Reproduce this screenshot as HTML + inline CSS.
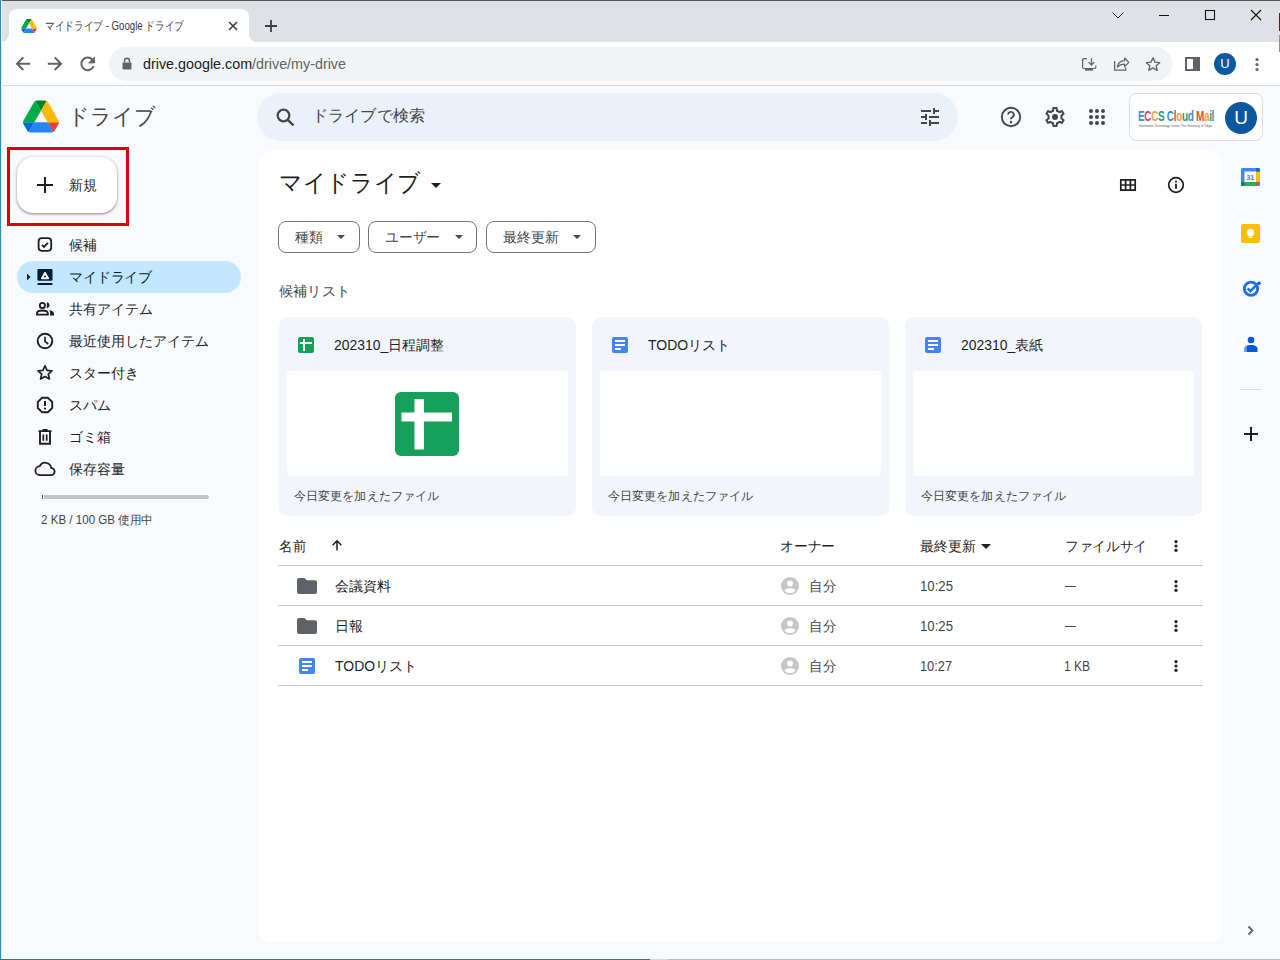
<!DOCTYPE html>
<html><head><meta charset="utf-8">
<style>
*{box-sizing:border-box;margin:0;padding:0}
html,body{width:1280px;height:960px;overflow:hidden;background:#f8fafd;font-family:"Liberation Sans",sans-serif;color:#1f1f1f}
.a{position:absolute}
svg{display:block}
/* chrome */
#topline{left:0;top:0;width:1280px;height:1px;background:#555}
#tabstrip{left:0;top:1px;width:1280px;height:41px;background:#dee1e6}
#tab{left:9px;top:9px;width:240px;height:34px;background:#fff;border-radius:8px 8px 0 0}
#toolbar{left:0;top:42px;width:1280px;height:43px;background:#fff}
#tbline{left:0;top:85px;width:1280px;height:1px;background:#dadce0}
#omni{left:109px;top:47px;width:1063px;height:34px;background:#f1f3f4;border-radius:17px}
.ttl{font-size:12px;color:#3c4043;white-space:nowrap}
.url{font-size:14px;color:#5f6368;white-space:nowrap}
#leftb{left:0;top:0;width:1px;height:960px;background:#2b8eb8;box-shadow:1px 0 0 #d4f6f8}
#main{left:258px;top:150px;width:965px;height:793px;background:#fff;border-radius:16px}
.nav{left:69px;font-size:14px;color:#1f1f1f;white-space:nowrap;line-height:20px}

.t{position:absolute;white-space:nowrap;line-height:20px;font-size:14px}
.fit{display:inline-block;transform-origin:0 50%}
#sb{left:257px;top:93px;width:701px;height:48px;background:#ebf1fa;border-radius:24px}
#newbtn{left:17px;top:157px;width:100px;height:56px;background:#fff;border-radius:16px;box-shadow:0 1px 2px rgba(0,0,0,.3),0 1px 3px 1px rgba(0,0,0,.15)}
#redbox{left:7px;top:147px;width:122px;height:79px;border:3px solid #e00000}
#pill{left:17px;top:261px;width:224px;height:32px;background:#c2e7ff;border-radius:16px}
.chip{position:absolute;top:221px;height:32px;border:1px solid #747775;border-radius:8px}
.card{position:absolute;top:317px;width:297px;height:199px;background:#f2f6fc;border-radius:9px}
.prev{position:absolute;left:8px;top:54px;width:281px;height:105px;background:#fff;border-radius:4px}
.hl{position:absolute;left:278px;width:925px;height:1px;background:#c7c7c7}
</style></head><body>
<div id="topline" class="a"></div>
<div id="tabstrip" class="a"></div>
<div id="tab" class="a"></div>
<div class="a" style="left:1px;top:34px;width:8px;height:8px;background:#fff"></div>
<div class="a" style="left:1px;top:34px;width:8px;height:8px;background:#dee1e6;border-radius:0 0 8px 0"></div>
<div class="a" style="left:249px;top:34px;width:8px;height:8px;background:#fff"></div>
<div class="a" style="left:249px;top:34px;width:8px;height:8px;background:#dee1e6;border-radius:0 0 0 8px"></div>
<div id="toolbar" class="a"></div>
<div id="tbline" class="a"></div>
<div id="omni" class="a"></div>
<div class="a ttl" style="left:45px;top:17px;line-height:18px"><span class="fit" style="--w:139px">マイドライブ - Google ドライブ</span></div>
<div class="a url" style="left:143px;top:55px;line-height:18px"><span class="fit" style="--w:203px"><span style="color:#202124">drive.google.com</span>/drive/my-drive</span></div>

<!-- tab favicon -->
<svg class="a" style="left:21px;top:19px" width="16" height="14" viewBox="0 0 87.3 78"><path d="m6.6 66.85 3.85 6.65c.8 1.4 1.95 2.5 3.3 3.3l13.75-23.8h-27.5c0 1.55.4 3.1 1.2 4.5z" fill="#0066da"/><path d="m43.65 25-13.75-23.8c-1.35.8-2.5 1.9-3.3 3.3l-25.4 44a9.06 9.06 0 0 0 -1.2 4.5h27.5z" fill="#00ac47"/><path d="m73.55 76.8c1.35-.8 2.5-1.9 3.3-3.3l1.6-2.75 7.65-13.25c.8-1.4 1.2-2.95 1.2-4.5h-27.502l5.852 11.5z" fill="#ea4335"/><path d="m43.65 25 13.75-23.8c-1.35-.8-2.9-1.2-4.5-1.2h-18.5c-1.6 0-3.15.45-4.5 1.2z" fill="#00832d"/><path d="m59.8 53h-32.3l-13.75 23.8c1.35.8 2.9 1.2 4.5 1.2h50.8c1.6 0 3.15-.45 4.5-1.2z" fill="#2684fc"/><path d="m73.4 26.5-12.7-22c-.8-1.4-1.95-2.5-3.3-3.3l-13.75 23.8 16.15 28h27.45c0-1.55-.4-3.1-1.2-4.5z" fill="#ffba00"/></svg>
<!-- tab close -->
<svg class="a" style="left:228px;top:21px" width="10" height="10" viewBox="0 0 10 10"><path d="M1 1L9 9M9 1L1 9" stroke="#3c4043" stroke-width="1.6"/></svg>
<!-- new tab -->
<svg class="a" style="left:264px;top:19px" width="14" height="14" viewBox="0 0 14 14"><path d="M7 1V13M1 7H13" stroke="#3c4043" stroke-width="1.8"/></svg>
<!-- window controls -->
<svg class="a" style="left:1100px;top:0" width="180" height="30" viewBox="0 0 180 30">
<path d="M12.5 12.5L18 18L23.5 12.5" fill="none" stroke="#202124" stroke-width="1"/>
<path d="M59 15.5H69" stroke="#111" stroke-width="1"/>
<rect x="105.5" y="10.5" width="9" height="9" fill="none" stroke="#111" stroke-width="1.1"/>
<path d="M151 10L161 20M161 10L151 20" stroke="#111" stroke-width="1.1"/>
</svg>
<!-- nav icons -->
<svg class="a" style="left:14px;top:55px" width="90" height="18" viewBox="0 0 90 18">
<path d="M16.2 8.7H3.2M9.3 2.4L3 8.7L9.3 15" fill="none" stroke="#5f6368" stroke-width="2"/>
<path d="M33.8 8.7H46.8M40.7 2.4L47 8.7L40.7 15" fill="none" stroke="#5f6368" stroke-width="2"/>
<path d="M78.3 4.6A6.3 6.3 0 1 0 79.6 11" fill="none" stroke="#5f6368" stroke-width="2"/>
<path d="M80.5 2V8H74.5Z" fill="#5f6368" stroke="#5f6368" stroke-width="0.8" stroke-linejoin="round"/>
</svg>
<!-- lock -->
<svg class="a" style="left:122px;top:57px" width="10" height="13" viewBox="0 0 10 13"><path d="M2.5 5.5V3.8A2.5 2.5 0 0 1 7.5 3.8V5.5" fill="none" stroke="#5f6368" stroke-width="1.5"/><rect x="0.5" y="5.5" width="9" height="7" rx="1" fill="#5f6368"/></svg>
<!-- omnibox right icons -->
<svg class="a" style="left:1080px;top:56px" width="84" height="16" viewBox="0 0 84 16">
<path d="M7 2.7H3.8A1.2 1.2 0 0 0 2.6 3.9V11.3A1.2 1.2 0 0 0 3.8 12.5H14.6A1.2 1.2 0 0 0 15.8 11.3V9.5" fill="none" stroke="#5f6368" stroke-width="1.2"/>
<path d="M11.5 2.2V8.8M8.6 6.1L11.5 9L14.4 6.1" fill="none" stroke="#5f6368" stroke-width="1.3"/>
<rect x="5" y="12.5" width="8" height="2.1" fill="#5f6368"/>
<path d="M34.6 5V14.1H45.7V11.6" fill="none" stroke="#5f6368" stroke-width="1.25"/>
<path d="M37.3 11C37.8 7.3 40.5 5 44.6 4.7V2L48.8 6.4L44.6 10.8V8.1C41.4 8.1 39 9.2 37.3 11Z" fill="none" stroke="#5f6368" stroke-width="1.2" stroke-linejoin="round"/>
<path d="M73 1.9L75.1 6.2L79.7 6.7L76.2 9.8L77.2 14.3L73 11.9L68.8 14.3L69.8 9.8L66.3 6.7L70.9 6.2Z" fill="none" stroke="#5f6368" stroke-width="1.35" stroke-linejoin="round"/>
</svg>
<!-- side panel -->
<svg class="a" style="left:1185px;top:57px" width="15" height="14" viewBox="0 0 15 14"><rect x="1" y="1" width="13" height="12" fill="none" stroke="#5f6368" stroke-width="2"/><rect x="8" y="1" width="6" height="12" fill="#5f6368"/></svg>
<!-- avatar -->
<div class="a" style="left:1214px;top:53px;width:22px;height:22px;border-radius:50%;background:#0b5aa0;color:#fff;font-size:13px;line-height:22px;text-align:center">U</div>
<!-- kebab -->
<svg class="a" style="left:1254px;top:57px" width="6" height="15" viewBox="0 0 6 15"><circle cx="3" cy="2.5" r="1.6" fill="#5f6368"/><circle cx="3" cy="7.5" r="1.6" fill="#5f6368"/><circle cx="3" cy="12.5" r="1.6" fill="#5f6368"/></svg>

<div id="main" class="a"></div>
<div id="leftb" class="a"></div>
<!-- ===== drive header ===== -->
<svg class="a" style="left:23px;top:100px" width="36" height="33" viewBox="0 0 87.3 78"><path d="m6.6 66.85 3.85 6.65c.8 1.4 1.95 2.5 3.3 3.3l13.75-23.8h-27.5c0 1.55.4 3.1 1.2 4.5z" fill="#0066da"/><path d="m43.65 25-13.75-23.8c-1.350.8-2.5 1.9-3.3 3.3l-25.4 44a9.06 9.06 0 0 0 -1.2 4.5h27.5z" fill="#00ac47"/><path d="m73.55 76.8c1.35-.8 2.5-1.9 3.3-3.3l1.6-2.75 7.65-13.25c.8-1.4 1.2-2.95 1.2-4.5h-27.502l5.852 11.5z" fill="#ea4335"/><path d="m43.65 25 13.75-23.8c-1.35-.8-2.9-1.2-4.5-1.2h-18.5c-1.6 0-3.15.45-4.5 1.2z" fill="#00832d"/><path d="m59.8 53h-32.3l-13.75 23.8c1.35.8 2.9 1.2 4.5 1.2h50.8c1.6 0 3.150-.45 4.5-1.2z" fill="#2684fc"/><path d="m73.4 26.5-12.7-22c-.8-1.4-1.95-2.5-3.3-3.3l-13.75 23.8 16.15 28h27.45c0-1.55-.4-3.1-1.2-4.5z" fill="#ffba00"/></svg>
<div class="t" style="left:68px;top:103px;font-size:22px;line-height:28px;color:#444746"><span class="fit" style="--w:88px">ドライブ</span></div>

<div id="sb" class="a"></div>
<svg class="a" style="left:275px;top:107px" width="20" height="20" viewBox="0 0 20 20"><circle cx="8.5" cy="8.5" r="5.8" fill="none" stroke="#444746" stroke-width="2.2"/><path d="M12.8 12.8L18.5 18.5" stroke="#444746" stroke-width="2.4"/></svg>
<div class="t" style="left:312px;top:105px;font-size:16px;line-height:22px;color:#444746"><span class="fit" style="--w:113px">ドライブで検索</span></div>
<svg class="a" style="left:921px;top:108px" width="18" height="18" viewBox="3 3 18 18"><path fill="#444746" d="M3 17v2h6v-2H3zM3 5v2h10V5H3zm10 16v-2h8v-2h-8v-2h-2v6h2zM7 9v2H3v2h4v2h2V9H7zm14 4v-2H11v2h10zm-6-4h2V7h4V5h-4V3h-2v6z"/></svg>

<!-- help / settings / apps -->
<svg class="a" style="left:999px;top:105px" width="24" height="24" viewBox="0 0 24 24"><circle cx="12" cy="12" r="9.2" fill="none" stroke="#444746" stroke-width="1.9"/><path d="M9.2 9.6A2.8 2.8 0 1 1 13.2 12.2C12.3 12.8 12 13.3 12 14.3" fill="none" stroke="#444746" stroke-width="1.9"/><circle cx="12" cy="17" r="1.2" fill="#444746"/></svg>
<svg class="a" style="left:1043px;top:105px" width="24" height="24" viewBox="0 0 24 24"><path fill="#444746" d="M19.43 12.98c.04-.32.07-.64.07-.98 0-.34-.03-.66-.07-.98l2.11-1.650c.19-.15.24-.42.12-.64l-2-3.46a.5.5 0 0 0-.61-.22l-2.49 1c-.52-.4-1.08-.73-1.690-.98l-.38-2.65A.488.488 0 0 0 14 2h-4c-.25 0-.46.18-.49.42l-.38 2.65c-.61.25-1.17.59-1.69.98l-2.49-1a.566.566 0 0 0-.18-.03c-.17 0-.34.09-.43.25l-2 3.46c-.13.22-.07.49.12.64l2.11 1.65c-.04.32-.07.65-.07.98s.03.66.07.98l-2.11 1.65c-.19.15-.24.42-.12.64l2 3.46a.5.5 0 0 0 .61.22l2.49-1c.52.4 1.08.73 1.69.98l.38 2.65c.03.24.24.42.49.42h4c.25 0 .46-.18.49-.42l.38-2.65c.61-.25 1.17-.59 1.69-.98l2.49 1c.06.02.12.03.18.03.17 0 .34-.09.43-.25l2-3.46c.12-.22.07-.49-.12-.64l-2.11-1.65zm-1.98-1.71c.04.31.05.52.05.73 0 .21-.02.43-.05.73l-.14 1.13.89.7 1.08.84-.7 1.21-1.27-.51-1.04-.42-.9.68c-.43.32-.84.56-1.25.73l-1.06.43-.16 1.13-.2 1.35h-1.4l-.19-1.35-.16-1.13-1.06-.43c-.43-.18-.83-.41-1.23-.71l-.91-.7-1.06.43-1.27.51-.7-1.21 1.08-.84.89-.7-.14-1.13c-.03-.31-.05-.54-.05-.74s.02-.43.05-.73l.14-1.13-.89-.7-1.08-.84.7-1.21 1.27.51 1.04.42.9-.68c.43-.32.84-.56 1.25-.73l1.06-.43.16-1.13.2-1.35h1.39l.19 1.35.16 1.13 1.06.43c.43.18.83.41 1.23.71l.91.7 1.06-.43 1.27-.51.7 1.21-1.07.85-.89.7.14 1.130z"/><circle cx="12" cy="12" r="3" fill="#444746"/></svg>
<svg class="a" style="left:1087px;top:107px" width="20" height="20" viewBox="0 0 20 20"><g fill="#444746"><circle cx="4" cy="4" r="2"/><circle cx="10" cy="4" r="2"/><circle cx="16" cy="4" r="2"/><circle cx="4" cy="10" r="2"/><circle cx="10" cy="10" r="2"/><circle cx="16" cy="10" r="2"/><circle cx="4" cy="16" r="2"/><circle cx="10" cy="16" r="2"/><circle cx="16" cy="16" r="2"/></g></svg>
<!-- eccs box -->
<div class="a" style="left:1129px;top:93px;width:134px;height:48px;background:#fff;border:1px solid #dadce0;border-radius:8px"></div>
<div class="t" style="left:1138px;top:108px;font-size:14px;line-height:16px;font-weight:bold;letter-spacing:-0.5px"><span class="fit" style="--w:76px"><span style="color:#3b8fd9">E</span><span style="color:#e04b3a">C</span><span style="color:#f0a050">C</span><span style="color:#2e9e5e">S</span> <span style="color:#3b8fd9">C</span><span style="color:#e04b3a">l</span><span style="color:#f0a050">o</span><span style="color:#2e9e5e">u</span><span style="color:#3b8fd9">d</span> <span style="color:#e04b3a">M</span><span style="color:#f0a050">a</span><span style="color:#2e9e5e">i</span><span style="color:#3b8fd9">l</span></span></div>
<div class="t" style="left:1139px;top:123px;font-size:4px;line-height:5px;color:#555"><span class="fit" style="--w:73px">Information Technology Center, The University of Tokyo</span></div>
<div class="a" style="left:1225px;top:102px;width:32px;height:32px;border-radius:50%;background:#0b57a0;color:#fff;font-size:19px;line-height:32px;text-align:center">U</div>

<!-- ===== main content ===== -->
<div class="t" style="left:279px;top:169px;font-size:24px;line-height:28px;color:#1f1f1f"><span class="fit" style="--w:142px">マイドライブ</span></div>
<svg class="a" style="left:431px;top:183px" width="10" height="5" viewBox="0 0 10 5"><path d="M0 0H10L5 5Z" fill="#1f1f1f"/></svg>
<svg class="a" style="left:1119px;top:178px" width="18" height="14" viewBox="0 0 18 14"><path d="M1.8 1.8H16.2V12.2H1.8ZM1.8 7H16.2M6.6 1.8V12.2M11.4 1.8V12.2" fill="none" stroke="#1f1f1f" stroke-width="1.7"/></svg>
<svg class="a" style="left:1166px;top:175px" width="20" height="20" viewBox="0 0 20 20"><circle cx="10" cy="10" r="7.3" fill="none" stroke="#1f1f1f" stroke-width="1.7"/><path d="M10 8.7V13.8" stroke="#1f1f1f" stroke-width="1.8"/><circle cx="10" cy="6.5" r="1.1" fill="#1f1f1f"/></svg>

<div class="chip" style="left:278px;width:82px"></div>
<div class="chip" style="left:368px;width:109px"></div>
<div class="chip" style="left:486px;width:110px"></div>
<div class="t" style="left:295px;top:227px;color:#444746"><span class="fit" style="--w:28px">種類</span></div>
<div class="t" style="left:385px;top:227px;color:#444746"><span class="fit" style="--w:55px">ユーザー</span></div>
<div class="t" style="left:503px;top:227px;color:#444746"><span class="fit" style="--w:56px">最終更新</span></div>
<svg class="a" style="left:337px;top:235px" width="8" height="4" viewBox="0 0 8 4"><path d="M0 0H8L4 4Z" fill="#444746"/></svg>
<svg class="a" style="left:455px;top:235px" width="8" height="4" viewBox="0 0 8 4"><path d="M0 0H8L4 4Z" fill="#444746"/></svg>
<svg class="a" style="left:573px;top:235px" width="8" height="4" viewBox="0 0 8 4"><path d="M0 0H8L4 4Z" fill="#444746"/></svg>

<div class="t" style="left:279px;top:281px;color:#444746"><span class="fit" style="--w:71px">候補リスト</span></div>

<div class="card" style="left:279px"><div class="prev"></div></div>
<div class="card" style="left:592px"><div class="prev"></div></div>
<div class="card" style="left:905px"><div class="prev"></div></div>
<svg class="a" style="left:298px;top:337px" width="16" height="16" viewBox="0 0 16 16"><rect width="16" height="16" rx="2" fill="#16a05a"/><rect x="2" y="5" width="12" height="2" fill="#fff"/><rect x="5" y="2" width="2" height="12" fill="#fff"/></svg>
<svg class="a" style="left:612px;top:337px" width="16" height="16" viewBox="0 0 16 16"><rect x="0" y="0" width="16" height="16" rx="2" fill="#4285f4"/><rect x="3" y="3" width="10" height="2" fill="#fff"/><rect x="3" y="7" width="10" height="2" fill="#fff"/><rect x="3" y="11" width="6" height="2" fill="#fff"/></svg><svg class="a" style="left:925px;top:337px" width="16" height="16" viewBox="0 0 16 16"><rect x="0" y="0" width="16" height="16" rx="2" fill="#4285f4"/><rect x="3" y="3" width="10" height="2" fill="#fff"/><rect x="3" y="7" width="10" height="2" fill="#fff"/><rect x="3" y="11" width="6" height="2" fill="#fff"/></svg>
<div class="t" style="left:334px;top:335px;color:#1f1f1f"><span class="fit" style="--w:110px">202310_日程調整</span></div>
<div class="t" style="left:648px;top:335px;color:#1f1f1f"><span class="fit" style="--w:82px">TODOリスト</span></div>
<div class="t" style="left:961px;top:335px;color:#1f1f1f"><span class="fit" style="--w:82px">202310_表紙</span></div>
<svg class="a" style="left:395px;top:392px" width="64" height="64" viewBox="0 0 64 64"><rect width="64" height="64" rx="6" fill="#16a05a"/><rect x="6.5" y="20.5" width="50.5" height="9" fill="#fff"/><rect x="19.5" y="7" width="9.5" height="50.5" fill="#fff"/></svg>
<div class="t" style="left:294px;top:486px;font-size:12px;color:#444746"><span class="fit" style="--w:145px">今日変更を加えたファイル</span></div>
<div class="t" style="left:608px;top:486px;font-size:12px;color:#444746"><span class="fit" style="--w:145px">今日変更を加えたファイル</span></div>
<div class="t" style="left:921px;top:486px;font-size:12px;color:#444746"><span class="fit" style="--w:145px">今日変更を加えたファイル</span></div>

<!-- table -->
<div class="t" style="left:279px;top:536px;color:#1f1f1f"><span class="fit" style="--w:27px">名前</span></div>
<svg class="a" style="left:331px;top:539px" width="12" height="12" viewBox="0 0 12 12"><path d="M6 11.5V1.8M1.6 6.2L6 1.8L10.4 6.2" fill="none" stroke="#1f1f1f" stroke-width="1.5"/></svg>
<div class="t" style="left:780px;top:536px;color:#1f1f1f"><span class="fit" style="--w:55px">オーナー</span></div>
<div class="t" style="left:920px;top:536px;color:#1f1f1f"><span class="fit" style="--w:56px">最終更新</span></div>
<svg class="a" style="left:981px;top:544px" width="10" height="5" viewBox="0 0 10 5"><path d="M0 0H10L5 5Z" fill="#1f1f1f"/></svg>
<div class="t" style="left:1065px;top:536px;color:#1f1f1f"><span class="fit" style="--w:82px">ファイルサイ</span></div>
<svg class="a" style="left:1174px;top:540px" width="4" height="12" viewBox="0 0 4 12"><circle cx="2" cy="1.7" r="1.6" fill="#1f1f1f"/><circle cx="2" cy="6" r="1.6" fill="#1f1f1f"/><circle cx="2" cy="10.3" r="1.6" fill="#1f1f1f"/></svg>
<div class="hl" style="top:565px"></div>
<div class="hl" style="top:605px"></div>
<div class="hl" style="top:645px"></div>
<div class="hl" style="top:685px"></div>
<svg class="a" style="left:297px;top:578px" width="20" height="16" viewBox="0 0 20 16"><path d="M2 0H7.5L9.8 2.2H18A2 2 0 0 1 20 4.2V14A2 2 0 0 1 18 16H2A2 2 0 0 1 0 14V2A2 2 0 0 1 2 0Z" fill="#5f6368"/></svg><svg class="a" style="left:297px;top:618px" width="20" height="16" viewBox="0 0 20 16"><path d="M2 0H7.5L9.8 2.2H18A2 2 0 0 1 20 4.2V14A2 2 0 0 1 18 16H2A2 2 0 0 1 0 14V2A2 2 0 0 1 2 0Z" fill="#5f6368"/></svg><svg class="a" style="left:299px;top:658px" width="16" height="16" viewBox="0 0 16 16"><rect x="0" y="0" width="16" height="16" rx="2" fill="#4285f4"/><rect x="3" y="3" width="10" height="2" fill="#fff"/><rect x="3" y="7" width="10" height="2" fill="#fff"/><rect x="3" y="11" width="6" height="2" fill="#fff"/></svg>
<div class="t" style="left:335px;top:576px;color:#1f1f1f"><span class="fit" style="--w:56px">会議資料</span></div>
<div class="t" style="left:335px;top:616px;color:#1f1f1f"><span class="fit" style="--w:28px">日報</span></div>
<div class="t" style="left:335px;top:656px;color:#1f1f1f"><span class="fit" style="--w:82px">TODOリスト</span></div>
<svg class="a" style="left:781px;top:577px" width="18" height="18" viewBox="0 0 18 18"><circle cx="9" cy="9" r="9" fill="#c4c7c5"/><circle cx="9" cy="6.6" r="3" fill="#fff"/><path d="M3.3 13.6C4.5 11.8 6.6 11 9 11S13.5 11.8 14.7 13.6A7.3 7.3 0 0 1 3.3 13.6Z" fill="#fff"/></svg><svg class="a" style="left:781px;top:617px" width="18" height="18" viewBox="0 0 18 18"><circle cx="9" cy="9" r="9" fill="#c4c7c5"/><circle cx="9" cy="6.6" r="3" fill="#fff"/><path d="M3.3 13.6C4.5 11.8 6.6 11 9 11S13.5 11.8 14.7 13.6A7.3 7.3 0 0 1 3.3 13.6Z" fill="#fff"/></svg><svg class="a" style="left:781px;top:657px" width="18" height="18" viewBox="0 0 18 18"><circle cx="9" cy="9" r="9" fill="#c4c7c5"/><circle cx="9" cy="6.6" r="3" fill="#fff"/><path d="M3.3 13.6C4.5 11.8 6.6 11 9 11S13.5 11.8 14.7 13.6A7.3 7.3 0 0 1 3.3 13.6Z" fill="#fff"/></svg>
<div class="t" style="left:809px;top:576px;color:#444746"><span class="fit" style="--w:27px">自分</span></div>
<div class="t" style="left:809px;top:616px;color:#444746"><span class="fit" style="--w:27px">自分</span></div>
<div class="t" style="left:809px;top:656px;color:#444746"><span class="fit" style="--w:27px">自分</span></div>
<div class="t" style="left:920px;top:576px;color:#444746"><span class="fit" style="--w:33px">10:25</span></div>
<div class="t" style="left:920px;top:616px;color:#444746"><span class="fit" style="--w:33px">10:25</span></div>
<div class="t" style="left:920px;top:656px;color:#444746"><span class="fit" style="--w:32px">10:27</span></div>
<div class="a" style="left:1065px;top:586px;width:11px;height:1px;background:#444746"></div>
<div class="a" style="left:1065px;top:626px;width:11px;height:1px;background:#444746"></div>
<div class="t" style="left:1064px;top:656px;color:#444746"><span class="fit" style="--w:26px">1 KB</span></div>
<svg class="a" style="left:1174px;top:580px" width="4" height="12" viewBox="0 0 4 12"><circle cx="2" cy="1.7" r="1.6" fill="#1f1f1f"/><circle cx="2" cy="6" r="1.6" fill="#1f1f1f"/><circle cx="2" cy="10.3" r="1.6" fill="#1f1f1f"/></svg><svg class="a" style="left:1174px;top:620px" width="4" height="12" viewBox="0 0 4 12"><circle cx="2" cy="1.7" r="1.6" fill="#1f1f1f"/><circle cx="2" cy="6" r="1.6" fill="#1f1f1f"/><circle cx="2" cy="10.3" r="1.6" fill="#1f1f1f"/></svg><svg class="a" style="left:1174px;top:660px" width="4" height="12" viewBox="0 0 4 12"><circle cx="2" cy="1.7" r="1.6" fill="#1f1f1f"/><circle cx="2" cy="6" r="1.6" fill="#1f1f1f"/><circle cx="2" cy="10.3" r="1.6" fill="#1f1f1f"/></svg>

<!-- ===== sidebar ===== -->
<div id="redbox" class="a"></div>
<div id="newbtn" class="a"></div>
<svg class="a" style="left:36px;top:176px" width="18" height="18" viewBox="0 0 18 18"><path d="M9 1V17M1 9H17" stroke="#1f1f1f" stroke-width="2"/></svg>
<div class="t" style="left:69px;top:175px;color:#1f1f1f"><span class="fit" style="--w:28px">新規</span></div>

<div id="pill" class="a"></div>
<svg class="a" style="left:26px;top:273px" width="5" height="8" viewBox="0 0 5 8"><path d="M1 0.5L4.5 4L1 7.5Z" fill="#1f1f1f"/></svg>

<!-- nav icons -->
<svg class="a" style="left:33px;top:233px" width="24" height="24" viewBox="0 0 24 24"><rect x="5.6" y="5.2" width="12.6" height="12.6" rx="3.2" fill="none" stroke="#1f1f1f" stroke-width="1.8"/><path d="M8.9 11.8L11 13.9L15 9.9" fill="none" stroke="#1f1f1f" stroke-width="1.8"/></svg>
<svg class="a" style="left:33px;top:264px" width="24" height="24" viewBox="0 0 24 24"><rect x="4.4" y="4.9" width="15.1" height="11.9" rx="1" fill="#001d35"/><rect x="4.5" y="19.1" width="15" height="1.9" rx="0.6" fill="#001d35"/><path d="M12 8.6L15.3 14.4H8.7Z" fill="#fff" stroke="#fff" stroke-width="1.6" stroke-linejoin="round"/><circle cx="12" cy="12.4" r="1" fill="#001d35"/></svg>
<svg class="a" style="left:33px;top:297px" width="24" height="24" viewBox="0 0 24 24"><circle cx="9.4" cy="8.4" r="2.6" fill="none" stroke="#1f1f1f" stroke-width="1.8"/><path d="M13.9 5A3.4 3.4 0 0 1 13.9 11.6Z" fill="#1f1f1f"/><path d="M3.9 17.7V16.6C3.9 14.6 6.6 13.5 9.4 13.5S14.9 14.6 14.9 16.6V17.7Z" fill="none" stroke="#1f1f1f" stroke-width="1.8" stroke-linejoin="round"/><path d="M16.3 13.1C18.5 13.6 21 14.7 21 16.6V18.6H17.1V16.6C17.1 15.3 16.8 14 16.3 13.1Z" fill="#1f1f1f"/></svg>
<svg class="a" style="left:35px;top:331px" width="20" height="20" viewBox="0 0 20 20"><circle cx="10" cy="10" r="7.3" fill="none" stroke="#1f1f1f" stroke-width="1.9"/><path d="M10 5.8V10.3L13.2 13" fill="none" stroke="#1f1f1f" stroke-width="1.7"/></svg>
<svg class="a" style="left:35px;top:363px" width="20" height="20" viewBox="0 0 20 20"><path d="M10 2.8L12.1 7.4L17 7.8L13.3 11.1L14.4 16L10 13.4L5.6 16L6.7 11.1L3 7.8L7.9 7.4Z" fill="none" stroke="#1f1f1f" stroke-width="1.7" stroke-linejoin="round"/></svg>
<svg class="a" style="left:35px;top:395px" width="20" height="20" viewBox="0 0 20 20"><path d="M7 2.8H13L17.2 7V13L13 17.2H7L2.8 13V7Z" fill="none" stroke="#1f1f1f" stroke-width="1.9" stroke-linejoin="round"/><path d="M10 6V11" stroke="#1f1f1f" stroke-width="2"/><circle cx="10" cy="13.6" r="1.1" fill="#1f1f1f"/></svg>
<svg class="a" style="left:35px;top:427px" width="20" height="20" viewBox="0 0 20 20"><path d="M3.5 4.2H16.5M7.5 2.8H12.5" stroke="#1f1f1f" stroke-width="1.8"/><path d="M5 4.5V16.7H15V4.5" fill="none" stroke="#1f1f1f" stroke-width="1.9"/><path d="M8.3 7.5V13.8M11.7 7.5V13.8" stroke="#1f1f1f" stroke-width="1.7"/></svg>
<svg class="a" style="left:34px;top:459px" width="22" height="20" viewBox="0 0 22 20"><path d="M6 16.2H16.8A3.6 3.6 0 0 0 17.2 9A6 6 0 0 0 5.8 7.2A4.5 4.5 0 0 0 6 16.2Z" fill="none" stroke="#1f1f1f" stroke-width="1.8"/></svg>

<div class="t" style="left:69px;top:235px;color:#1f1f1f"><span class="fit" style="--w:28px">候補</span></div>
<div class="t" style="left:69px;top:267px;color:#001d35"><span class="fit" style="--w:83px">マイドライブ</span></div>
<div class="t" style="left:69px;top:299px;color:#1f1f1f"><span class="fit" style="--w:84px">共有アイテム</span></div>
<div class="t" style="left:69px;top:331px;color:#1f1f1f"><span class="fit" style="--w:140px">最近使用したアイテム</span></div>
<div class="t" style="left:69px;top:363px;color:#1f1f1f"><span class="fit" style="--w:70px">スター付き</span></div>
<div class="t" style="left:69px;top:395px;color:#1f1f1f"><span class="fit" style="--w:42px">スパム</span></div>
<div class="t" style="left:69px;top:427px;color:#1f1f1f"><span class="fit" style="--w:42px">ゴミ箱</span></div>
<div class="t" style="left:69px;top:459px;color:#1f1f1f"><span class="fit" style="--w:56px">保存容量</span></div>

<div class="a" style="left:44px;top:495px;width:165px;height:4px;background:#c1c4c8;border-radius:0 2px 2px 0"></div>
<div class="a" style="left:42px;top:495px;width:1px;height:4px;background:#1a5fb0"></div>
<div class="t" style="left:41px;top:510px;font-size:12px;color:#444746"><span class="fit" style="--w:112px">2 KB / 100 GB 使用中</span></div>

<!-- ===== right side panel ===== -->
<svg class="a" style="left:1241px;top:168px" width="19" height="18" viewBox="0 0 19 18"><rect x="0" y="0" width="19" height="18" rx="1.5" fill="#4285f4"/><rect x="15" y="3.5" width="4" height="10.5" fill="#fbbc04"/><rect x="3.5" y="14" width="11.5" height="4" fill="#34a853"/><path d="M15 14H19L15 18Z" fill="#ea4335"/><path d="M15 0H17.5A1.5 1.5 0 0 1 19 1.5V3.5H15Z" fill="#1967d2"/><path d="M0 14H3.5V18H1.5A1.5 1.5 0 0 1 0 16.5Z" fill="#188038"/><rect x="3.5" y="3.5" width="11.5" height="10.5" fill="#fff"/><text x="9.3" y="11.6" font-size="7.5" font-family="Liberation Sans" fill="#4a7fd8" text-anchor="middle" font-weight="bold">31</text></svg>
<svg class="a" style="left:1241px;top:224px" width="19" height="19" viewBox="0 0 19 19"><rect x="0" y="0" width="19" height="19" rx="2" fill="#fbbc04"/><circle cx="9.5" cy="8.5" r="3.8" fill="#fff"/><rect x="7.8" y="12.4" width="3.4" height="1.6" fill="#fff"/></svg>
<svg class="a" style="left:1242px;top:280px" width="19" height="18" viewBox="0 0 19 18"><circle cx="9" cy="8.7" r="6.6" fill="none" stroke="#1f6fe5" stroke-width="2.9"/><path d="M5.6 8.4L8.4 11.2L15.4 4.2" fill="none" stroke="#1f6fe5" stroke-width="2.5"/><circle cx="17" cy="3.2" r="1.7" fill="#0b57d0"/></svg>
<svg class="a" style="left:1243px;top:336px" width="16" height="17" viewBox="0 0 16 17"><circle cx="8" cy="4" r="3.3" fill="#0b57d0"/><path d="M1.5 16V12.6C1.5 10.4 4.5 9 8 9S14.5 10.4 14.5 12.6V16Z" fill="#0b57d0"/><path d="M1.5 16V12.6C1.5 11.4 2.3 10.4 3.8 9.8V16Z" fill="#6da0f0"/></svg>
<div class="a" style="left:1240px;top:389px;width:21px;height:1px;background:#dadce0"></div>
<svg class="a" style="left:1243px;top:426px" width="16" height="16" viewBox="0 0 16 16"><path d="M8 1V15M1 8H15" stroke="#1f1f1f" stroke-width="2"/></svg>
<svg class="a" style="left:1245px;top:925px" width="12" height="12" viewBox="0 0 12 12"><path d="M3.5 1.5L7.5 5.5L3.5 9.5" fill="none" stroke="#5f6368" stroke-width="1.8"/></svg>

<div class="a" style="left:0;top:959px;width:650px;height:1px;background:#1d7fa6"></div>
<div class="a" style="left:650px;top:959px;width:18px;height:1px;background:#d6d8da"></div>
<div class="a" style="left:668px;top:959px;width:612px;height:1px;background:#b9bbbd"></div>
<div class="a" style="left:1279px;top:13px;width:1px;height:18px;background:#6a1028"></div>
<div class="a" style="left:1279px;top:35px;width:1px;height:17px;background:#b08878"></div>
<script>
(function(){var els=document.querySelectorAll('.fit');for(var i=0;i<els.length;i++){var e=els[i];var w=parseFloat(getComputedStyle(e).getPropertyValue('--w'));var n=e.getBoundingClientRect().width;if(w&&n){var r=w/n;if(r>0.4&&r<2.5){e.style.transform='scaleX('+r+')';}}}})();
</script>
</body></html>
